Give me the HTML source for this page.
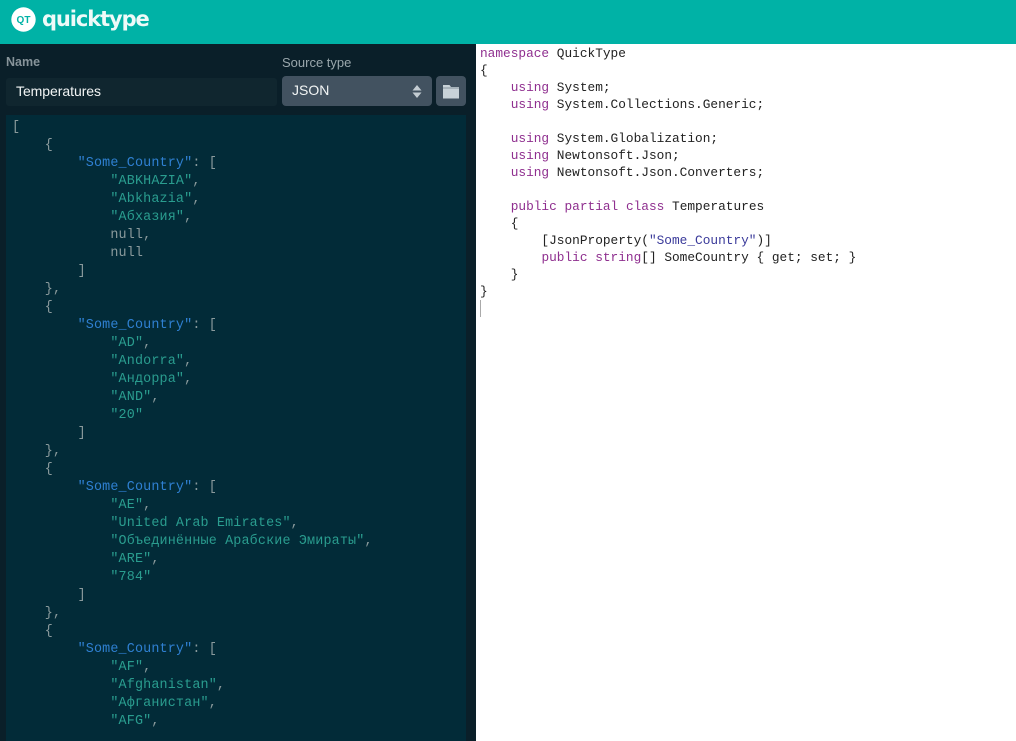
<!DOCTYPE html>
<html><head><meta charset="utf-8"><title>quicktype</title>
<style>
html,body{margin:0;padding:0;width:1016px;height:741px;overflow:hidden;background:#fff}
*{box-sizing:border-box}
.abs,.l,.r{position:absolute}
#hd{left:0;top:0;width:1016px;height:44px;background:#00b2a6}
#side{left:0;top:44px;width:476px;height:697px;background:#0a1f29}
#ed{left:6px;top:115px;width:460px;height:626px;background:#022b38;overflow:hidden}
.lab{font:bold 12.500px "Liberation Sans",sans-serif;color:#87949a;top:55px}
.l,.r{white-space:pre;font-family:"Liberation Mono","DejaVu Sans Mono",monospace}
.l{font-size:13.400px;letter-spacing:.16px;line-height:18px;color:#8a9a9c;left:12px}
.l .k{color:#2f80d2}.l .s{color:#2a9d8f}
.r{font-size:12.800px;line-height:17px;color:#222;left:480px}
.r .k{color:#8f2f8f}.r .s{color:#3a3a9a}
</style></head><body>
<div class="abs" id="hd"></div>
<svg class="abs" style="left:11px;top:7px" width="25" height="25" viewBox="0 0 25 25"><circle cx="12.500" cy="12.500" r="12.200" fill="#fff"/><text x="12.500" y="16" text-anchor="middle" font-family="Liberation Sans,sans-serif" font-weight="bold" font-size="10" fill="#00b2a6">QT</text></svg>
<div class="abs" style="left:42px;top:4px;font:bold 21px/30px 'DejaVu Sans','Liberation Sans',sans-serif;letter-spacing:-1.100px;color:#eefaf8">quicktype</div>
<div class="abs" id="side"></div>
<div class="abs lab" style="left:6px">Name</div>
<div class="abs lab" style="left:282px;font-weight:normal;color:#9aa7ac;font-size:13px;top:55px">Source type</div>
<div class="abs" style="left:6px;top:78px;width:271px;height:28px;background:#10262f;border-radius:3px;font:14px/26px 'Liberation Sans',sans-serif;color:#f2f5f5;padding-left:10px;letter-spacing:-.05px">Temperatures</div>
<div class="abs" style="left:282px;top:76px;width:150px;height:30px;background:#425260;border-radius:4px;font:14px/29px 'Liberation Sans',sans-serif;color:#f2f5f5;padding-left:10px">JSON</div>
<svg class="abs" style="left:411px;top:84px" width="12" height="15" viewBox="0 0 12 15"><path d="M6 1L10.500 6.500H1.500ZM1.500 8.500H10.500L6 14Z" fill="#c3ccd2"/></svg>
<div class="abs" style="left:436px;top:76px;width:30px;height:30px;background:#425260;border-radius:4px"></div>
<svg class="abs" style="left:442px;top:84px" width="18" height="15" viewBox="0 0 18 15"><path d="M1 1H7.500L9 3H17V3.700H1ZM1 4.300H17V14.500H1Z" fill="#c8d2d8"/></svg>
<div class="abs" id="ed"></div>
<div class="l" style="top:119px">[</div>
<div class="l" style="top:137px">    {</div>
<div class="l" style="top:155px">        <span class="k">"Some_Country"</span>: [</div>
<div class="l" style="top:173px">            <span class="s">"ABKHAZIA"</span>,</div>
<div class="l" style="top:191px">            <span class="s">"Abkhazia"</span>,</div>
<div class="l" style="top:209px">            <span class="s">"Абхазия"</span>,</div>
<div class="l" style="top:227px">            null,</div>
<div class="l" style="top:245px">            null</div>
<div class="l" style="top:263px">        ]</div>
<div class="l" style="top:281px">    },</div>
<div class="l" style="top:299px">    {</div>
<div class="l" style="top:317px">        <span class="k">"Some_Country"</span>: [</div>
<div class="l" style="top:335px">            <span class="s">"AD"</span>,</div>
<div class="l" style="top:353px">            <span class="s">"Andorra"</span>,</div>
<div class="l" style="top:371px">            <span class="s">"Андорра"</span>,</div>
<div class="l" style="top:389px">            <span class="s">"AND"</span>,</div>
<div class="l" style="top:407px">            <span class="s">"20"</span></div>
<div class="l" style="top:425px">        ]</div>
<div class="l" style="top:443px">    },</div>
<div class="l" style="top:461px">    {</div>
<div class="l" style="top:479px">        <span class="k">"Some_Country"</span>: [</div>
<div class="l" style="top:497px">            <span class="s">"AE"</span>,</div>
<div class="l" style="top:515px">            <span class="s">"United Arab Emirates"</span>,</div>
<div class="l" style="top:533px">            <span class="s">"Объединённые Арабские Эмираты"</span>,</div>
<div class="l" style="top:551px">            <span class="s">"ARE"</span>,</div>
<div class="l" style="top:569px">            <span class="s">"784"</span></div>
<div class="l" style="top:587px">        ]</div>
<div class="l" style="top:605px">    },</div>
<div class="l" style="top:623px">    {</div>
<div class="l" style="top:641px">        <span class="k">"Some_Country"</span>: [</div>
<div class="l" style="top:659px">            <span class="s">"AF"</span>,</div>
<div class="l" style="top:677px">            <span class="s">"Afghanistan"</span>,</div>
<div class="l" style="top:695px">            <span class="s">"Афганистан"</span>,</div>
<div class="l" style="top:713px">            <span class="s">"AFG"</span>,</div>
<div class="r" style="top:45px"><span class="k">namespace</span> QuickType</div>
<div class="r" style="top:62px">{</div>
<div class="r" style="top:79px">    <span class="k">using</span> System;</div>
<div class="r" style="top:96px">    <span class="k">using</span> System.Collections.Generic;</div>
<div class="r" style="top:130px">    <span class="k">using</span> System.Globalization;</div>
<div class="r" style="top:147px">    <span class="k">using</span> Newtonsoft.Json;</div>
<div class="r" style="top:164px">    <span class="k">using</span> Newtonsoft.Json.Converters;</div>
<div class="r" style="top:198px">    <span class="k">public</span> <span class="k">partial</span> <span class="k">class</span> Temperatures</div>
<div class="r" style="top:215px">    {</div>
<div class="r" style="top:232px">        [JsonProperty(<span class="s">"Some_Country"</span>)]</div>
<div class="r" style="top:249px">        <span class="k">public</span> <span class="k">string</span>[] SomeCountry { get; set; }</div>
<div class="r" style="top:266px">    }</div>
<div class="r" style="top:283px">}</div>
<div class="abs" style="left:480px;top:300px;width:1px;height:17px;background:#aaa"></div>
</body></html>
